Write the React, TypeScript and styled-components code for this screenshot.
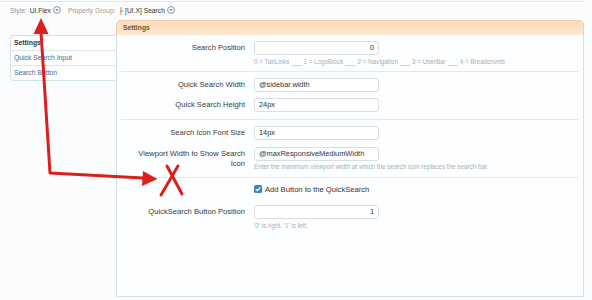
import styled, { createGlobalStyle } from 'styled-components';

const GlobalStyle = createGlobalStyle`
  body {
    margin: 0;
    background: #fbfcfd;
    font-family: 'Liberation Sans', Arial, sans-serif;
    color: #333;
  }
`;

function DropCircle() {
  return (
    <svg width="8" height="8" viewBox="0 0 8 8">
      <circle cx="4" cy="4" r="3.4" fill="#fff" stroke="#777" strokeWidth="0.8" />
      <path d="M2.4 3.3 L5.6 3.3 L4 5 Z" fill="#666" />
    </svg>
  );
}

function Annotations() {
  return (
    <Overlay width="592" height="300" viewBox="0 0 592 300">
      <g stroke="#db1f1a" strokeWidth="3" fill="none" strokeLinecap="round" strokeLinejoin="round">
        <polyline points="41,32 50,173 143,178" />
        <line x1="167" y1="166" x2="182" y2="194" />
        <line x1="178" y1="166" x2="161" y2="195" />
      </g>
      <path d="M41 18 L48.5 34 L33.5 34 Z" fill="#db1f1a" />
      <path d="M157.5 179 L142 186 L143 171 Z" fill="#db1f1a" />
    </Overlay>
  );
}

export default function App() {
  return (
    <Page>
      <GlobalStyle />
      <TopRule />
      <TopBar>
        <Muted>Style:</Muted>
        <Strong>UI.Flex</Strong>
        <DropCircle />
        <Muted $gap>Property Group:</Muted>
        <Strong>├ [UI.X] Search</Strong>
        <DropCircle />
      </TopBar>

      <Content>
        <Sidebar>
          <SideHead>Settings</SideHead>
          <SideLink>Quick Search Input</SideLink>
          <SideLink>Search Button</SideLink>
        </Sidebar>

        <Main>
          <MainHead>Settings</MainHead>
          <Panel>
            <Section $pad="6px 0 5px" $gap={6}>
              <Row>
                <Label>Search Position</Label>
                <div>
                  <Field $align="right">0</Field>
                  <Hint>0 = TabLinks ___ 1 = LogoBlock ___ 2 = Navigation ___ 3 = UserBar ___ 4 = Breadcrumb</Hint>
                </div>
              </Row>
            </Section>

            <Section $pad="6px 0 7px" $gap={6}>
              <Row>
                <Label>Quick Search Width</Label>
                <Field>@sidebar.width</Field>
              </Row>
              <Row>
                <Label>Quick Search Height</Label>
                <Field>24px</Field>
              </Row>
            </Section>

            <Section $pad="6px 0 6px" $gap={7}>
              <Row>
                <Label>Search Icon Font Size</Label>
                <Field>14px</Field>
              </Row>
              <Row>
                <Label>Viewport Width to Show Search Icon</Label>
                <div>
                  <Field>@maxResponsiveMediumWidth</Field>
                  <Hint $top={2}>Enter the maximum viewport width at which the search icon replaces the search bar.</Hint>
                </div>
              </Row>
            </Section>

            <Section $pad="6px 0 6px" $gap={11} $last>
              <Row>
                <span />
                <CheckLine>
                  <Check>
                    <svg width="8" height="8" viewBox="0 0 8 8">
                      <path d="M1.8 4.2 L3.4 5.7 L6.3 2.3" stroke="#fff" strokeWidth="1.2" fill="none" />
                    </svg>
                  </Check>
                  Add Button to the QuickSearch
                </CheckLine>
              </Row>
              <Row>
                <Label>QuickSearch Button Position</Label>
                <div>
                  <Field $align="right">1</Field>
                  <Hint>'0' is right. '1' is left.</Hint>
                </div>
              </Row>
            </Section>
          </Panel>
        </Main>
      </Content>

      <Annotations />
    </Page>
  );
}

const Page = styled.div`
  position: relative;
  width: 592px;
  height: 300px;
  overflow: hidden;
`;

const Overlay = styled.svg`
  position: absolute;
  left: 0;
  top: 0;
  pointer-events: none;
`;

const TopRule = styled.div`
  width: 583px;
  height: 1px;
  margin-top: 1px;
  background: #dde8f0;
`;

const TopBar = styled.div`
  display: flex;
  align-items: center;
  gap: 2px;
  height: 14px;
  margin-top: 1px;
  padding-left: 10px;
  font-size: 6.7px;
`;

const Muted = styled.span<{ $gap?: boolean }>`
  color: #9a9a9a;
  margin-left: ${(p) => (p.$gap ? '5px' : '0')};
`;

const Strong = styled.span`
  color: #2f2f2f;
  margin-left: 1px;
`;

const Content = styled.div`
  display: flex;
  align-items: flex-start;
  margin-top: 3px;
  padding-left: 10px;
`;

const Sidebar = styled.div`
  width: 105px;
  margin-top: 15px;
  background: #fff;
  border: 1px solid #d3e1eb;
  border-right: none;
  border-radius: 4px 0 0 4px;
  font-size: 6.8px;
`;

const SideHead = styled.div`
  height: 14px;
  line-height: 14px;
  padding-left: 3px;
  font-weight: bold;
  color: #333;
`;

const SideLink = styled.div`
  height: 14px;
  line-height: 14px;
  padding-left: 3px;
  border-top: 1px solid #dde7ef;
  color: #3a6d98;
`;

const Main = styled.div`
  width: 468px;
`;

const MainHead = styled.div`
  height: 14px;
  line-height: 14px;
  padding-left: 6px;
  font-size: 6.8px;
  font-weight: bold;
  color: #6b5136;
  background: linear-gradient(#fcdcb8, #fde8d2);
  border: 1px solid #efd1ae;
  border-bottom: none;
  border-radius: 5px 5px 0 0;
`;

const Panel = styled.div`
  height: 261px;
  background: #fdfeff;
  border: 1px solid #d3e1eb;
  border-top: none;
  padding: 0 4px;
`;

const Section = styled.div<{ $pad: string; $gap: number; $last?: boolean }>`
  display: flex;
  flex-direction: column;
  gap: ${(p) => p.$gap}px;
  padding: ${(p) => p.$pad};
  border-bottom: ${(p) => (p.$last ? 'none' : '1px solid #e2eaf1')};
`;

const Row = styled.div`
  display: grid;
  grid-template-columns: 124px 1fr;
  column-gap: 9px;
  align-items: start;
`;

const Label = styled.div`
  padding: 2px 0 0 14px;
  text-align: right;
  font-size: 7.6px;
  line-height: 10px;
  color: #3a3a3a;
`;

const Field = styled.div<{ $align?: 'left' | 'right' }>`
  box-sizing: border-box;
  width: 125px;
  height: 14px;
  line-height: 12px;
  padding: 0 4px;
  font-size: 7.4px;
  text-align: ${(p) => p.$align || 'left'};
  color: #333;
  background: #fff;
  border: 1px solid #d7dee4;
  border-radius: 3px;
`;

const Hint = styled.div<{ $top?: number }>`
  margin-top: ${(p) => p.$top ?? 3}px;
  font-size: 6.3px;
  line-height: 8px;
  color: #a8afb5;
  white-space: nowrap;
`;

const CheckLine = styled.div`
  display: flex;
  align-items: center;
  gap: 3px;
  height: 10px;
  font-size: 7.6px;
  color: #333;
`;

const Check = styled.span`
  display: inline-flex;
  width: 8px;
  height: 8px;
  border-radius: 1.5px;
  background: #3c86c6;
`;
